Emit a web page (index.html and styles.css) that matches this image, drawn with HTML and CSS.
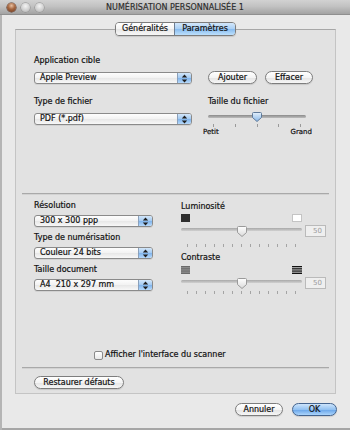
FILE: index.html
```html
<!DOCTYPE html>
<html lang="fr">
<head>
<meta charset="utf-8">
<title>Numérisation personnalisée 1</title>
<link rel="stylesheet" href="styles.css">
</head>
<body>
<svg class="defs" width="0" height="0" aria-hidden="true">
  <defs>
    <linearGradient id="gb" x1="0" y1="0" x2="0" y2="1"><stop offset="0" stop-color="#e4f0fb"/><stop offset="1" stop-color="#86b6e8"/></linearGradient>
    <linearGradient id="gw" x1="0" y1="0" x2="0" y2="1"><stop offset="0" stop-color="#ffffff"/><stop offset="1" stop-color="#dadada"/></linearGradient>
    <linearGradient id="gt" x1="0" y1="0" x2="0" y2="1"><stop offset="0" stop-color="#8a8a8a"/><stop offset="1" stop-color="#bcbcbc"/></linearGradient>
    <linearGradient id="gt2" x1="0" y1="0" x2="0" y2="1"><stop offset="0" stop-color="#a8a8a8"/><stop offset="1" stop-color="#d0d0d0"/></linearGradient>
    <pattern id="tk9" patternUnits="userSpaceOnUse" x="6" y="0" width="9" height="40"><rect x="0" y="0" width="1" height="40" fill="#a4a4a4"/></pattern>
  </defs>
</svg>
<div class="window">
  <div class="titlebar">
    <div class="lights">
      <span class="light close"></span>
      <span class="light"></span>
      <span class="light"></span>
    </div>
    <div class="title">NUMÉRISATION PERSONNALISÉE 1</div>
    <div></div>
  </div>
  <div class="content">
    <div class="tabs">
      <span class="tab first">Généralités</span>
      <span class="tab active">Paramètres</span>
    </div>
    <div class="box">
      <section class="sec1">
        <div class="label r1">Application cible</div>
        <div class="popup wide r2">
          <span class="pv">Apple Preview</span>
          <span class="pa"><svg width="7" height="9" viewBox="0 0 7 9"><path d="M3.5 0.5L6.2 3.6H0.8Z M3.5 8.5L6.2 5.4H0.8Z" fill="#1e1e1e"/></svg></span>
        </div>
        <div class="btnrow r2 c2">
          <span class="btn b-add">Ajouter</span>
          <span class="btn b-del">Effacer</span>
        </div>
        <div class="label r3">Type de fichier</div>
        <div class="label r3 c2">Taille du fichier</div>
        <div class="popup wide r4">
          <span class="pv">PDF (*.pdf)</span>
          <span class="pa"><svg width="7" height="9" viewBox="0 0 7 9"><path d="M3.5 0.5L6.2 3.6H0.8Z M3.5 8.5L6.2 5.4H0.8Z" fill="#1e1e1e"/></svg></span>
        </div>
        <div class="sizeblock r4 c2">
          <svg class="sl" width="98" height="15" viewBox="0 0 98 15">
            <rect x="0" y="3" width="98" height="3" rx="1.5" fill="url(#gt)"/>
            <g fill="#9a9a9a">
              <rect x="5" y="12" width="1" height="3"/>
              <rect x="27" y="12" width="1" height="3"/>
              <rect x="49" y="12" width="1" height="3"/>
              <rect x="70" y="12" width="1" height="3"/>
              <rect x="92" y="12" width="1" height="3"/>
            </g>
            <path transform="translate(44 0)" d="M0.5 1.5Q0.5 0.5 1.5 0.5H8.5Q9.5 0.5 9.5 1.5V5.5L5 9.5L0.5 5.5Z" fill="url(#gb)" stroke="#5f7a9a"/>
          </svg>
          <div class="scale"><span>Petit</span><span>Grand</span></div>
        </div>
      </section>
      <div class="sep"></div>
      <section class="sec2">
        <div class="sec2-main">
          <div class="col-l">
            <div class="label">Résolution</div>
            <div class="popup small">
              <span class="pv">300 x 300 ppp</span>
              <span class="pa"><svg width="7" height="9" viewBox="0 0 7 9"><path d="M3.5 0.5L6.2 3.6H0.8Z M3.5 8.5L6.2 5.4H0.8Z" fill="#1e1e1e"/></svg></span>
            </div>
            <div class="label gap">Type de numérisation</div>
            <div class="popup small">
              <span class="pv">Couleur 24 bits</span>
              <span class="pa"><svg width="7" height="9" viewBox="0 0 7 9"><path d="M3.5 0.5L6.2 3.6H0.8Z M3.5 8.5L6.2 5.4H0.8Z" fill="#1e1e1e"/></svg></span>
            </div>
            <div class="label gap">Taille document</div>
            <div class="popup small">
              <span class="pv">A4&nbsp; 210 x 297 mm</span>
              <span class="pa"><svg width="7" height="9" viewBox="0 0 7 9"><path d="M3.5 0.5L6.2 3.6H0.8Z M3.5 8.5L6.2 5.4H0.8Z" fill="#1e1e1e"/></svg></span>
            </div>
          </div>
          <div class="col-r">
            <div class="label">Luminosité</div>
            <div class="icons">
              <svg width="9" height="8" viewBox="0 0 9 8"><rect x="0" y="0" width="9" height="8" fill="#2e2e2e"/></svg>
              <svg width="10" height="8" viewBox="0 0 10 8"><rect x="0.5" y="0.5" width="9" height="7" fill="#ffffff" stroke="#c4c4c4"/></svg>
            </div>
            <div class="srow">
              <svg class="sl" width="121" height="22" viewBox="0 0 121 22">
                <rect x="0" y="3" width="121" height="3" rx="1.5" fill="url(#gt2)"/>
                <rect x="6" y="19" width="109" height="3" fill="url(#tk9)"/>
                <path transform="translate(56 1)" d="M0.5 1.5Q0.5 0.5 1.5 0.5H8.5Q9.5 0.5 9.5 1.5V6.5L5 10.5L0.5 6.5Z" fill="url(#gw)" stroke="#9a9a9a"/>
              </svg>
              <div class="val">50</div>
            </div>
            <div class="label lab2">Contraste</div>
            <div class="icons ic2">
              <svg width="9" height="8" viewBox="0 0 9 8"><rect x="0" y="0" width="9" height="8" fill="#9a9a9a"/><rect x="0" y="0" width="9" height="1.3" fill="#6a6a6a"/><rect x="0" y="2.2" width="9" height="1.3" fill="#6a6a6a"/><rect x="0" y="4.4" width="9" height="1.3" fill="#6a6a6a"/><rect x="0" y="6.6" width="9" height="1.4" fill="#6a6a6a"/></svg>
              <svg width="10" height="8" viewBox="0 0 10 8"><rect x="0" y="0" width="10" height="1.3" fill="#111"/><rect x="0" y="2.2" width="10" height="1.3" fill="#111"/><rect x="0" y="4.4" width="10" height="1.3" fill="#111"/><rect x="0" y="6.6" width="10" height="1.4" fill="#111"/></svg>
            </div>
            <div class="srow">
              <svg class="sl" width="121" height="17" viewBox="0 0 121 17">
                <rect x="0" y="3" width="121" height="3" rx="1.5" fill="url(#gt2)"/>
                <rect x="6" y="14" width="109" height="3" fill="url(#tk9)"/>
                <path transform="translate(56 1)" d="M0.5 1.5Q0.5 0.5 1.5 0.5H8.5Q9.5 0.5 9.5 1.5V6.5L5 10.5L0.5 6.5Z" fill="url(#gw)" stroke="#9a9a9a"/>
              </svg>
              <div class="val">50</div>
            </div>
          </div>
        </div>
        <div class="check">
          <span class="cb"></span>
          <span>Afficher l'interface du scanner</span>
        </div>
      </section>
      <div class="sep"></div>
      <section class="sec3">
        <span class="btn b-rest">Restaurer défauts</span>
      </section>
    </div>
    <div class="footer">
      <span class="btn b-cancel">Annuler</span>
      <span class="btn b-ok">OK</span>
    </div>
  </div>
</div>
</body>
</html>
```

FILE: styles.css
```css
* { box-sizing: border-box; margin: 0; padding: 0; }
html, body { width: 350px; height: 430px; overflow: hidden; }
body {
  font-family: "DejaVu Sans", "Noto Sans", sans-serif;
  font-size: 8px;
  line-height: 10px;
  color: #111;
  background: #e9e9e9;
  -webkit-text-stroke: 0.2px #111;
}
.defs { position: absolute; width: 0; height: 0; overflow: hidden; }
.window {
  width: 350px;
  height: 430px;
  display: flex;
  flex-direction: column;
  background: #e9e9e9;
  box-shadow: inset 2px 0 #b5b5b5, inset 0 -2px #a6a6a6;
}
.titlebar {
  height: 15px;
  flex: none;
  display: grid;
  grid-template-columns: 1fr auto 1fr;
  align-items: center;
  background: linear-gradient(#d2d2d2, #c2c2c2 45%, #aeaeae 80%, #a3a3a3);
  border-bottom: 1px solid #8f8f8f;
}
.lights { display: flex; gap: 5px; padding-left: 7px; }
.light {
  width: 9px; height: 9px; border-radius: 50%;
  background: radial-gradient(circle at 50% 35%, #f4f4f4 0, #cdcdcd 60%, #a9a9a9 100%);
  box-shadow: 0 0 0 0.5px #8c8c8c;
}
.light.close {
  background: radial-gradient(circle at 50% 30%, #e9c0a2 0, #a5663f 45%, #6a3822 100%);
  box-shadow: 0 0 0 0.5px #5a3322;
}
.title { color: #2b2b2b; white-space: nowrap; padding-top: 1px; -webkit-text-stroke: 0.15px #2b2b2b; }

.content {
  flex: 1;
  display: flex;
  flex-direction: column;
  padding: 7px 14px 0 15px;
}
.tabs {
  align-self: center;
  display: flex;
  height: 14px;
  margin-bottom: -7px;
  position: relative;
  z-index: 1;
  border: 1px solid #7c7c7c;
  border-radius: 4px;
  overflow: hidden;
  box-shadow: 0 1px 1px rgba(0,0,0,0.12);
}
.tab {
  text-align: center;
  line-height: 12px;
  background: linear-gradient(#ffffff, #f4f4f4 50%, #e6e6e6 51%, #f7f7f7);
}
.tab.first { width: 58px; }
.tab.active {
  width: 61px;
  border-left: 1px solid #6d7d92;
  background: linear-gradient(#d3e7fb, #a9cff4 50%, #87bbef 51%, #bde0fc);
}

.box {
  flex: none;
  height: 365px;
  display: flex;
  flex-direction: column;
  background: #e2e2e2;
  border: 1px solid #c4c4c4;
  border-top-color: #a7a7a7;
}
.label { line-height: 10px; white-space: nowrap; }

.sec1 {
  height: 163px;
  flex: none;
  padding: 26px 0 0 18px;
  display: grid;
  grid-template-columns: 158px 106px;
  column-gap: 16px;
  align-content: start;
  align-items: start;
}
.r1 { grid-row: 1; grid-column: 1; }
.r2 { grid-row: 2; grid-column: 1; margin-top: 6px; }
.r3 { grid-row: 3; grid-column: 1; margin-top: 13px; }
.r4 { grid-row: 4; grid-column: 1; margin-top: 6px; }
.c2 { grid-column: 2; }

.popup {
  display: flex;
  height: 12px;
  border: 1px solid #8a8a8a;
  border-radius: 3px;
  overflow: hidden;
  background: linear-gradient(#fdfdfd, #f2f2f2 50%, #e7e7e7 51%, #f8f8f8);
  box-shadow: 0 1px 0 rgba(0,0,0,0.07);
}
.popup.wide { width: 158px; }
.popup.small { width: 119px; }
.pv { flex: 1; padding-left: 5px; line-height: 10px; white-space: nowrap; }
.pa {
  width: 14px;
  display: flex;
  align-items: center;
  justify-content: center;
  border-left: 1px solid #8aa0bb;
  background: linear-gradient(#d2e6f9, #a2c9f1 50%, #7fb3eb 51%, #b6d9fb);
}

.btnrow { display: flex; gap: 8px; margin-top: 5px; }
.btn {
  display: block;
  height: 13px;
  border: 1px solid #7d7d7d;
  border-radius: 7px;
  background: linear-gradient(#ffffff, #f4f4f4 50%, #e4e4e4 51%, #f6f6f6);
  line-height: 11px;
  text-align: center;
  color: #111;
  white-space: nowrap;
  box-shadow: 0 1px 1px rgba(0,0,0,0.12);
}
.b-add { width: 49px; }
.b-del { width: 48px; }

.sizeblock { margin-top: 5px; width: 98px; }
.sl { display: block; flex: none; }
.scale {
  display: flex;
  justify-content: space-between;
  margin: 1px -6px 0 -5px;
  font-size: 7px;
  line-height: 8px;
}

.sep {
  flex: none;
  height: 2px;
  margin: 0 6px;
  border-top: 1px solid #a9a9a9;
  border-bottom: 1px solid #d2d2d2;
}

.sec2 {
  height: 172px;
  flex: none;
  display: flex;
  flex-direction: column;
  padding: 6px 0 7px 18px;
}
.sec2-main { display: flex; align-items: flex-start; }
.col-l { width: 119px; display: flex; flex-direction: column; }
.col-l .popup { margin-top: 4px; }
.col-l .gap { margin-top: 6px; }
.col-r { width: 145px; margin-left: 28px; margin-top: 1px; display: flex; flex-direction: column; }
.icons { display: flex; justify-content: space-between; width: 121px; margin-top: 2px; height: 8px; }
.icons svg { display: block; }
.ic2 { margin-top: 3px; }
.srow { display: flex; align-items: flex-start; gap: 3px; margin-top: 3px; }
.val {
  width: 21px;
  height: 12px;
  border: 1px solid #bababa;
  background: #efefef;
  color: #9b9b9b;
  -webkit-text-stroke: 0;
  font-size: 7px;
  line-height: 10px;
  text-align: right;
  padding-right: 3px;
}
.lab2 { margin-top: 6px; }

.check {
  margin-top: auto;
  margin-left: 60px;
  display: flex;
  align-items: center;
  gap: 2px;
  height: 10px;
}
.cb {
  width: 9px; height: 9px;
  border: 1px solid #8a8a8a;
  border-radius: 2px;
  background: linear-gradient(#ffffff, #e9e9e9);
}

.sec3 { height: 24px; flex: none; padding: 7px 0 0 18px; }
.b-rest { width: 90px; }

.footer {
  display: flex;
  justify-content: flex-end;
  gap: 9px;
  margin-top: 9px;
  margin-right: -1px;
}
.b-cancel { width: 48px; }
.b-ok {
  width: 45px;
  border-color: #44648f;
  background: linear-gradient(#cde4fb, #93c2f2 50%, #66a3e8 51%, #acd5fc);
}
```
